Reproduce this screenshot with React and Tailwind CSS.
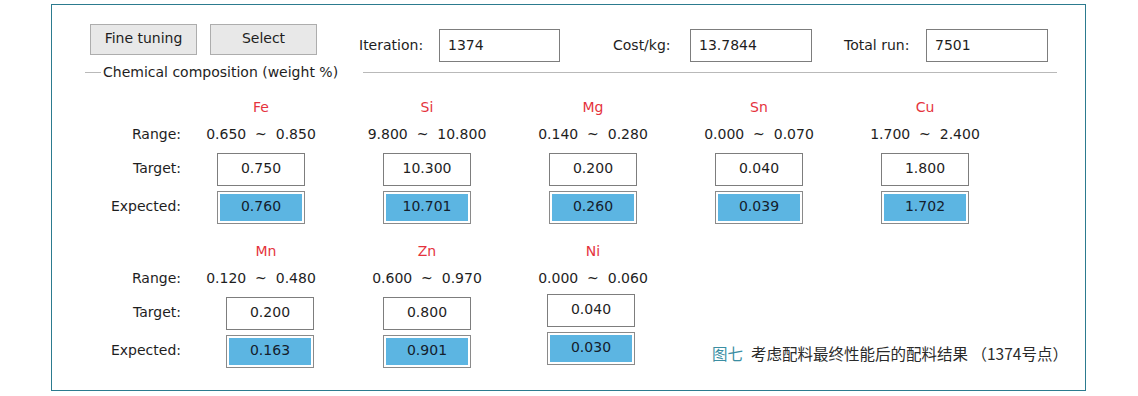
import React from 'react';

const row1 = [
    { name: 'Fe', range: '0.650  ~  0.850', target: '0.750', expected: '0.760' },
    { name: 'Si', range: '9.800  ~  10.800', target: '10.300', expected: '10.701' },
    { name: 'Mg', range: '0.140  ~  0.280', target: '0.200', expected: '0.260' },
    { name: 'Sn', range: '0.000  ~  0.070', target: '0.040', expected: '0.039' },
    { name: 'Cu', range: '1.700  ~  2.400', target: '1.800', expected: '1.702' },
];

const row2 = [
    { name: 'Mn', range: '0.120  ~  0.480', target: '0.200', expected: '0.163', shift: 'pl-[18px]', tMt: 'mt-[4px]', eMt: 'mt-[5px]' },
    { name: 'Zn', range: '0.600  ~  0.970', target: '0.800', expected: '0.901', shift: '', tMt: 'mt-[4px]', eMt: 'mt-[5px]' },
    { name: 'Ni', range: '0.000  ~  0.060', target: '0.040', expected: '0.030', shift: 'pr-[4px]', tMt: 'mt-[1px]', eMt: 'mt-[2px]' },
];

const TargetBox = ({ value }) => (
    <div className="w-[88px] h-[33px] border border-[#7d7d7d] bg-white flex items-center justify-center pb-[3px]">
        {value}
    </div>
);

const ExpectedBox = ({ value }) => (
    <div className="w-[88px] h-[33px] border border-[#8a8a8a] bg-[#5cb5e2] text-[#14202c] shadow-[inset_0_0_0_2px_#ffffff] flex items-center justify-center pb-[3px]">
        {value}
    </div>
);

const Block = ({ items, caption }) => (
    <div className="grid grid-cols-[126px_repeat(5,166px)]">
        {/* element names */}
        <div className="h-[26px]" />
        {items.map((it) => (
            <div key={it.name} className={`h-[26px] flex items-center justify-center text-[#e5333d] ${it.name === 'Mn' ? 'pl-[10px]' : ''}`}>
                {it.name}
            </div>
        ))}
        {Array.from({ length: 5 - items.length }).map((_, i) => <div key={'n' + i} />)}

        {/* range */}
        <div className="h-[29px] flex items-center justify-end -mr-[3px]">Range:</div>
        {items.map((it) => (
            <div key={it.name} className="h-[29px] flex items-center justify-center whitespace-pre">
                {it.range}
            </div>
        ))}
        {Array.from({ length: 5 - items.length }).map((_, i) => <div key={'r' + i} />)}

        {/* target */}
        <div className="mt-[4px] h-[33px] flex items-center justify-end -mr-[3px] pb-[2px]">Target:</div>
        {items.map((it) => (
            <div key={it.name} className={`${it.tMt || 'mt-[4px]'} flex justify-center ${it.shift || ''}`}>
                <TargetBox value={it.target} />
            </div>
        ))}
        {Array.from({ length: 5 - items.length }).map((_, i) => <div key={'t' + i} />)}

        {/* expected */}
        <div className="mt-[5px] h-[33px] flex items-center justify-end -mr-[3px] pb-[2px]">Expected:</div>
        {items.map((it) => (
            <div key={it.name} className={`${it.eMt || 'mt-[5px]'} flex justify-center ${it.shift || ''}`}>
                <ExpectedBox value={it.expected} />
            </div>
        ))}
        {caption && (
            <div className="col-span-2 mt-[10px] pl-[36px] flex items-center whitespace-nowrap text-[15.5px] text-[#2a2a2a] font-['Noto_Sans_CJK_SC',sans-serif]">
                <span className="text-[#3b8ea3]">图七</span>
                <span className="ml-[8px]">考虑配料最终性能后的配料结果 （1374号点）</span>
            </div>
        )}
    </div>
);

const App = () => {
    return (
        <div className="w-[1138px] h-[396px] bg-white overflow-hidden">
            <div className="ml-[51px] mt-[4px] w-[1035px] h-[387px] border border-[#2c7b8f] text-[14px] text-[#1e1e1e] font-['DejaVu_Sans',sans-serif]">
                {/* Toolbar */}
                <div className="flex items-start pl-[38px] pt-[19px]">
                    <button className="w-[107px] h-[31px] bg-[#e8e8e8] border border-[#adadad] pb-[2px]">Fine tuning</button>
                    <button className="ml-[13px] w-[107px] h-[31px] bg-[#e8e8e8] border border-[#adadad] pb-[2px]">Select</button>

                    <div className="ml-[42px] mt-[5px] flex items-center">
                        <span className="w-[80px]">Iteration:</span>
                        <div className="w-[121px] h-[33px] border border-[#7d7d7d] flex items-center pl-[8px] pb-[1px]">1374</div>
                    </div>
                    <div className="ml-[53px] mt-[5px] flex items-center">
                        <span className="w-[77px]">Cost/kg:</span>
                        <div className="w-[122px] h-[33px] border border-[#7d7d7d] flex items-center pl-[8px] pb-[1px]">13.7844</div>
                    </div>
                    <div className="ml-[32px] mt-[5px] flex items-center">
                        <span className="w-[82px]">Total run:</span>
                        <div className="w-[122px] h-[33px] border border-[#7d7d7d] flex items-center pl-[8px] pb-[1px]">7501</div>
                    </div>
                </div>

                {/* Group caption line */}
                <div className="flex items-center pl-[33px] h-[18px] mt-[1px]">
                    <div className="w-[16px] h-px bg-[#b9b9b9]" />
                    <span className="ml-[2px]">Chemical composition (weight %)</span>
                    <div className="ml-[25px] w-[694px] h-px bg-[#b9b9b9]" />
                </div>

                <div className="mt-[13px]">
                    <Block items={row1} />
                </div>
                <div className="mt-[14px]">
                    <Block items={row2} caption />
                </div>
            </div>
        </div>
    );
};

export default App;
